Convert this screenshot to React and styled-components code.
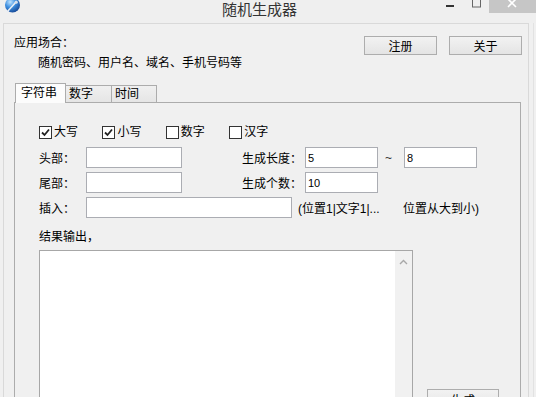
import React from 'react'
import styled, { createGlobalStyle } from 'styled-components'

const GlobalStyle = createGlobalStyle`
  html, body {
    margin: 0;
    padding: 0;
    background: #f0f0f0;
  }
  body {
    font-family: "Liberation Sans", "Noto Sans CJK SC", sans-serif;
    font-size: 12px;
    color: #000;
  }
`

const Shell = styled.div`
  width: 536px;
  height: 397px;
  overflow: hidden;
  background: #f0f0f0;
`

const TitleBar = styled.div`
  display: flex;
  align-items: flex-start;
  height: 23px;
  background: #efefef;
`

const AppIcon = styled.svg`
  display: block;
  margin-left: 3px;
  flex: none;
`

const Title = styled.div`
  flex: 1;
  padding-left: 58px;
  text-align: center;
  font-family: "Noto Sans CJK SC", sans-serif;
  font-size: 15px;
  line-height: 17px;
  color: #333;
`

const Controls = styled.div`
  display: flex;
  align-items: flex-start;
  flex: none;
`

const CloseBox = styled.div`
  width: 47px;
  height: 13px;
  background: #c6c6c6;
`

const Edge = styled.div`
  box-sizing: border-box;
  width: 534px;
  height: 374px;
  border-right: 1px solid #e2e2e2;
`

const Frame = styled.div`
  box-sizing: border-box;
  margin-left: 3px;
  width: 526px;
  height: 100%;
  border: 1px solid #d9d9d9;
  border-bottom: none;
`

const TopSection = styled.div`
  display: flex;
  justify-content: space-between;
  height: 59px;
`

const Info = styled.div`
  display: flex;
  flex-direction: column;
  padding-left: 10px;
`

const Text = styled.div`
  line-height: 16px;
  margin-top: ${p => p.$top || 0}px;
  padding-left: ${p => p.$indent || 0}px;
  white-space: nowrap;
`

const ButtonGroup = styled.div`
  display: flex;
  gap: 12px;
  margin-top: 12px;
  margin-right: 6px;
`

const Button = styled.button`
  box-sizing: border-box;
  width: ${p => p.$w || 73}px;
  height: ${p => p.$h || 19}px;
  padding: 0;
  border: 1px solid #adadad;
  background: linear-gradient(#f2f2f2, #e4e4e4);
  font-family: "Noto Sans CJK SC", sans-serif;
  font-size: 12px;
  line-height: 16px;
  color: #000;
`

const Tabs = styled.div`
  margin-left: 10px;
`

const TabStrip = styled.div`
  display: flex;
  align-items: flex-end;
  height: 19px;
  padding-left: 1px;
`

const Tab = styled.div`
  box-sizing: border-box;
  width: ${p => p.$w}px;
  height: ${p => (p.$active ? 20 : 17)}px;
  padding-left: ${p => (p.$active ? 5 : 3)}px;
  border: 1px solid #acacac;
  border-bottom: none;
  background: ${p => (p.$active ? '#fcfcfc' : 'linear-gradient(#f0f0f0, #e5e5e5)')};
  line-height: ${p => (p.$active ? 19 : 16)}px;
  white-space: nowrap;
  position: relative;
  z-index: ${p => (p.$active ? 1 : 0)};
  margin-bottom: ${p => (p.$active ? -1 : 0)}px;
  margin-left: ${p => (p.$first ? 0 : -1)}px;
`

const Panel = styled.div`
  box-sizing: border-box;
  width: 507px;
  height: 320px;
  border: 1px solid #acacac;
  padding: 23px 0 0 24px;
`

const CheckRow = styled.div`
  display: flex;
  height: 13px;
  margin-bottom: 8px;
`

const CheckItem = styled.label`
  display: flex;
  align-items: center;
  gap: 2px;
  width: 63.4px;
  line-height: 13px;
  white-space: nowrap;
`

const Box = styled.span`
  box-sizing: border-box;
  display: flex;
  align-items: center;
  justify-content: center;
  width: 13px;
  height: 13px;
  border: 1px solid #333;
  background: #fff;
`

const Row = styled.div`
  display: flex;
  align-items: center;
  height: 21px;
  margin-bottom: ${p => p.$gap ?? 4}px;
`

const Label = styled.span`
  width: ${p => p.$w}px;
  margin-left: ${p => p.$left || 0}px;
  flex: none;
  white-space: nowrap;
`

const Input = styled.input`
  box-sizing: border-box;
  width: ${p => p.$w}px;
  height: 21px;
  flex: none;
  margin: 0;
  padding: 0 2px;
  border: 1px solid #abadb3;
  background: #fff;
  font-family: "Liberation Sans", sans-serif;
  font-size: 11px;
  color: #000;
  outline: none;
`

const Tilde = styled.span`
  width: 26px;
  padding-left: 7px;
  box-sizing: border-box;
  flex: none;
  color: #333;
`

const Hint = styled.span`
  margin-left: 6px;
  white-space: pre;
`

const OutputLabel = styled.div`
  line-height: 14px;
  margin-top: 12px;
  margin-bottom: 6px;
`

const OutputRow = styled.div`
  display: flex;
  align-items: flex-start;
`

const OutputBox = styled.div`
  box-sizing: border-box;
  display: flex;
  width: 374px;
  height: 170px;
  border: 1px solid #a7a7a7;
  background: #fff;
`

const Output = styled.textarea`
  flex: 1;
  margin: 0;
  padding: 2px;
  border: none;
  resize: none;
  outline: none;
  background: #fff;
  font-family: "Liberation Sans", "Noto Sans CJK SC", sans-serif;
  font-size: 12px;
`

const ScrollTrack = styled.div`
  width: 17px;
  background: #f1f1f1;
  display: flex;
  justify-content: center;
  padding-top: 8px;
`

const GenerateButton = styled(Button)`
  margin-left: 14px;
  margin-top: 139px;
`

const Check = ({ checked, label }) => (
  <CheckItem>
    <Box>
      {checked && (
        <svg width="9" height="9" viewBox="0 0 9 9">
          <path d="M1 4.5 L3.5 7 L8 1.5" fill="none" stroke="#222" strokeWidth="1.8" />
        </svg>
      )}
    </Box>
    {label}
  </CheckItem>
)

export default function App() {
  return (
    <Shell>
      <GlobalStyle />
      <TitleBar>
        <AppIcon width="18" height="14" viewBox="0 0 18 14">
          <defs>
            <radialGradient id="globe" cx="0.35" cy="0.3" r="0.8">
              <stop offset="0" stopColor="#bfe3ff" />
              <stop offset="0.45" stopColor="#3d8fe0" />
              <stop offset="1" stopColor="#123f8c" />
            </radialGradient>
          </defs>
          <circle cx="9.5" cy="5" r="7.5" fill="url(#globe)" />
          <path d="M4 12 L13 2" stroke="#e8eef5" strokeWidth="1.6" />
          <circle cx="13.2" cy="2.2" r="1.6" fill="#d8e0ea" />
        </AppIcon>
        <Title>随机生成器</Title>
        <Controls>
          <svg width="26" height="13" viewBox="0 0 26 13">
            <rect x="6" y="5" width="8" height="2" fill="#333" />
          </svg>
          <svg width="23" height="13" viewBox="0 0 23 13">
            <rect x="6.5" y="-0.5" width="8" height="7.5" fill="none" stroke="#666" />
          </svg>
          <CloseBox>
            <svg width="47" height="13" viewBox="0 0 47 13">
              <path d="M19 -1 L27 7 M27 -1 L19 7" stroke="#fff" strokeWidth="1.6" />
            </svg>
          </CloseBox>
        </Controls>
      </TitleBar>
      <Edge>
        <Frame>
          <TopSection>
            <Info>
              <Text $top={11}>应用场合：</Text>
              <Text $top={4} $indent={24}>随机密码、用户名、域名、手机号码等</Text>
            </Info>
            <ButtonGroup>
              <Button>注册</Button>
              <Button>关于</Button>
            </ButtonGroup>
          </TopSection>
          <Tabs>
            <TabStrip>
              <Tab $active $first $w={51}>字符串</Tab>
              <Tab $w={47}>数字</Tab>
              <Tab $w={46}>时间</Tab>
            </TabStrip>
            <Panel>
              <CheckRow>
                <Check checked label="大写" />
                <Check checked label="小写" />
                <Check label="数字" />
                <Check label="汉字" />
              </CheckRow>
              <Row>
                <Label $w={47}>头部：</Label>
                <Input $w={96} defaultValue="" />
                <Label $w={63} $left={60}>生成长度：</Label>
                <Input $w={73} defaultValue="5" />
                <Tilde>~</Tilde>
                <Input $w={73} defaultValue="8" />
              </Row>
              <Row>
                <Label $w={47}>尾部：</Label>
                <Input $w={96} defaultValue="" />
                <Label $w={63} $left={60}>生成个数：</Label>
                <Input $w={73} defaultValue="10" />
              </Row>
              <Row $gap={0}>
                <Label $w={47}>插入：</Label>
                <Input $w={206} defaultValue="" />
                <Hint>(位置1|文字1|...       位置从大到小)</Hint>
              </Row>
              <OutputLabel>结果输出，</OutputLabel>
              <OutputRow>
                <OutputBox>
                  <Output defaultValue="" />
                  <ScrollTrack>
                    <svg width="9" height="6" viewBox="0 0 9 6">
                      <path d="M1 5 L4.5 1.5 L8 5" fill="none" stroke="#a8a8a8" strokeWidth="1.4" />
                    </svg>
                  </ScrollTrack>
                </OutputBox>
                <GenerateButton $w={72} $h={22}>生成</GenerateButton>
              </OutputRow>
            </Panel>
          </Tabs>
        </Frame>
      </Edge>
    </Shell>
  )
}
